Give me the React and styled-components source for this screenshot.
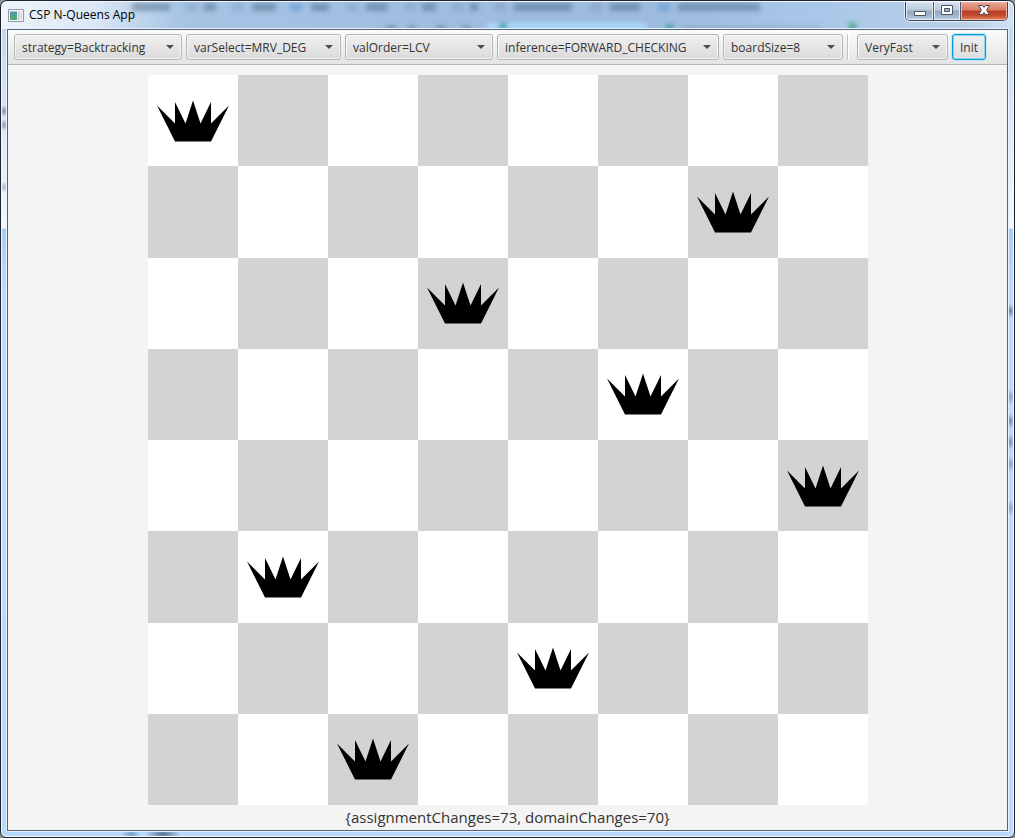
import React, { useState } from "react";
import styled, { createGlobalStyle } from "styled-components";

const GlobalStyle = createGlobalStyle`
  * { box-sizing: border-box; }
  body {
    margin: 0;
    background: #8d9094;
    color: #333;
    font-family: "Open Sans", "Noto Sans", sans-serif;
    font-size: 12px;
  }
`;

const Window = styled.div`
  display: flex;
  flex-direction: column;
  min-height: 100vh;
  padding: 0 6px 6px;
  border: 1px solid #1e222c;
  border-radius: 7px 7px 6px 6px;
  box-shadow: inset 0 0 0 1px #f4f9ff;
  background:
    radial-gradient(ellipse 4px 6px at 3px 110px, #7d8ba0 0, #7d8ba000 100%),
    radial-gradient(ellipse 4px 6px at 3px 124px, #8799c0 0, #8799c000 100%),
    radial-gradient(ellipse 4px 6px at 3px 186px, #a9b6cb 0, #a9b6cb00 100%),
    radial-gradient(ellipse 5px 7px at calc(100% - 4px) 310px, #67809a 0, #67809a00 100%),
    radial-gradient(ellipse 5px 8px at calc(100% - 4px) 396px, #8f9ccb 0, #8f9ccb00 100%),
    radial-gradient(ellipse 5px 8px at calc(100% - 4px) 420px, #7f88b8 0, #7f88b800 100%),
    radial-gradient(ellipse 5px 8px at calc(100% - 4px) 441px, #7f88b8 0, #7f88b800 100%),
    radial-gradient(ellipse 5px 8px at calc(100% - 4px) 463px, #8f9ccb 0, #8f9ccb00 100%),
    radial-gradient(ellipse 5px 8px at calc(100% - 4px) 507px, #8f9ccb 0, #8f9ccb00 100%),
    radial-gradient(ellipse 10px 5px at 130px calc(100% - 3px), #6f9cc8 0, #6f9cc800 100%),
    radial-gradient(ellipse 18px 6px at 162px calc(100% - 3px), #4f6f8f 0, #6f8cae00 100%),
    linear-gradient(#b9d1ee 0, #d3e4f7 90px, #f2f8fe 227px, #a9cdf0 228px, #badbfd 290px, #b9dafb);
`;

const TitleBar = styled.header`
  display: grid;
  height: 28px;
  margin: 0 -5px;
  overflow: hidden;
  border-radius: 6px 6px 0 0;
  border-top: 1px solid #f4f9ff;
  background: linear-gradient(90deg, #edf4fb 0, #dce8f5 90px, #a6c4e4 180px, #a0bedf 420px, #9dbbdc 640px, #a9c7e8 820px, #b9cfe8 960px, #cfe0f3);
`;

const Glass = styled.svg`
  grid-area: 1 / 1;
  width: 1000px;
  height: 27px;
`;

const TitleRow = styled.div`
  z-index: 1;
  display: flex;
  grid-area: 1 / 1;
  align-items: flex-start;
  gap: 5px;
  min-width: 0;
  padding: 0 5px 0 6px;
`;

const AppIcon = styled.svg`
  width: 16px;
  height: 14px;
  margin-top: 6px;
`;

const Title = styled.h1`
  flex: 1;
  margin: 4px 0 0;
  color: #000;
  font-size: 12px;
  font-weight: 400;
  line-height: 18px;
`;

const Captions = styled.div`
  display: flex;
  border: 1px solid #3c4454;
  border-top: 0;
  border-radius: 0 0 5px 5px;
  box-shadow: 0 0 0 1px #e3eefa;
  overflow: hidden;
`;

const Caption = styled.button`
  display: grid;
  place-items: center;
  width: ${(p) => p.$w}px;
  height: 18px;
  padding: 0;
  border: 0;
  border-right: ${(p) => (p.$close ? 0 : "1px solid #4d586a")};
  box-shadow: inset 0 0 0 1px ${(p) => (p.$close ? "#f0b5a8" : "#e3ebf5")};
  background: ${(p) =>
    p.$close
      ? "linear-gradient(#eaa797 0, #d77a67 45%, #bd3a22 50%, #c44c2e 75%, #e2875f)"
      : "linear-gradient(#d3dfed 0, #bccbdd 45%, #93a6be 50%, #a0b5ce 75%, #bdd2e8)"};
`;

const Client = styled.main`
  display: flex;
  flex: 1;
  flex-direction: column;
  border: 1px solid #56657c;
  box-shadow: 0 0 0 1px #e6f1fc;
  background: #f4f4f4;
`;

const ToolBar = styled.div`
  display: flex;
  align-items: center;
  gap: 4px;
  height: 35px;
  padding: 0 6px;
  border-bottom: 1px solid #b5b5b5;
  background: linear-gradient(#fbfbfb, #e4e4e4);
`;

const Picker = styled.label`
  display: grid;
  flex: 0 1 ${(p) => p.$w}px;
  align-items: center;
`;

const Select = styled.select`
  grid-area: 1 / 1;
  width: 100%;
  height: 26px;
  padding: 0 20px 0 7px;
  appearance: none;
  border: 1px solid #b4b4b4;
  border-radius: 3px;
  background: linear-gradient(#f0f0f0, #dadada);
  box-shadow: inset 0 0 0 1px #f6f6f6;
  color: #333;
  font: inherit;
`;

const Arrow = styled.svg`
  z-index: 1;
  grid-area: 1 / 1;
  justify-self: end;
  width: 8px;
  height: 4px;
  margin-right: 8px;
  fill: #4c4c4c;
  pointer-events: none;
`;

const Separator = styled.div`
  width: 2px;
  height: 26px;
  margin-right: 4px;
  border-left: 1px solid #c4c4c4;
  background: #fff;
`;

const InitButton = styled.button`
  width: 34px;
  height: 26px;
  padding: 0;
  border: 1px solid #039ed3;
  border-radius: 3px;
  background: linear-gradient(#f0f0f0, #dedede);
  box-shadow: inset 0 0 0 1px #8fd3ee, 0 0 1px 1px #c3e6f3;
  color: #333;
  font: inherit;
`;

const Board = styled.div`
  display: grid;
  flex: 1;
  grid-template-columns: repeat(8, 1fr);
  grid-template-rows: repeat(8, 1fr);
  align-self: center;
  width: 100%;
  max-width: 720px;
  margin-top: 10px;
`;

const Square = styled.div`
  display: grid;
  place-items: center;
  background: ${(p) => (p.$dark ? "#d3d3d3" : "#fff")};
`;

const Crown = styled.svg`
  width: 80%;
`;

const Status = styled.output`
  display: block;
  font-size: 15px;
  line-height: 25px;
  text-align: center;
`;

const settings = [
  { name: "Strategy", value: "strategy=Backtracking", width: 168 },
  { name: "Variable selection", value: "varSelect=MRV_DEG", width: 155 },
  { name: "Value ordering", value: "valOrder=LCV", width: 148 },
  { name: "Inference", value: "inference=FORWARD_CHECKING", width: 222 },
  { name: "Board size", value: "boardSize=8", width: 120 },
];

const queens = [0, 6, 3, 5, 7, 1, 4, 2];

function GlassReflection() {
  return (
    <Glass viewBox="0 0 1000 27" aria-hidden="true">
      <defs>
        <filter id="soft" x="-5%" y="-50%" width="110%" height="200%">
          <feGaussianBlur stdDeviation="2.500" />
        </filter>
      </defs>
      <g filter="url(#soft)" strokeWidth="8" fill="none">
        <path
          stroke="#4c6889"
          strokeOpacity=".5"
          d="M130 5H168M202 5H214M250 5H274M309 5H327M364 5H386M420 5H434M468 5H476M512 5H570M608 5H638M676 5H758"
        />
        <path
          stroke="#4c6889"
          strokeOpacity=".2"
          d="M184 5H196M230 5H242M344 5H356M402 5H414M450 5H462M492 5H504M588 5H600M680 28H820"
        />
        <path stroke="#5c9ad6" strokeOpacity=".6" d="M288 5H300M656 5H668" />
        <path stroke="#4c6889" strokeOpacity=".4" d="M384 27H394M406 27H414M434 27H444M460 27H468" />
        <path stroke="#a9d8ff" d="M485 25H645" />
        <path stroke="#2f9b9b" strokeOpacity=".8" d="M497 25H505M664 26H671" />
        <path stroke="#2f9b6b" strokeOpacity=".8" d="M847 25H854" />
      </g>
    </Glass>
  );
}

function Choice({ name, value, width }) {
  return (
    <Picker $w={width}>
      <Select aria-label={name} defaultValue={value}>
        <option>{value}</option>
      </Select>
      <Arrow viewBox="0 0 8 4" aria-hidden="true">
        <path d="M0 0H8L4 4Z" />
      </Arrow>
    </Picker>
  );
}

function Queen() {
  return (
    <Crown viewBox="0 0 72 42" role="img" aria-label="Queen">
      <path d="M0 5.500L18 23.500V2L28.500 23.500L36 0.500L43.500 23.500L54 2V23.500L72 5.500L54 41.500H18Z" />
    </Crown>
  );
}

export default function App() {
  const [placed, setPlaced] = useState(queens);
  return (
    <>
      <GlobalStyle />
      <Window>
        <TitleBar>
          <GlassReflection />
          <TitleRow>
            <AppIcon viewBox="0 0 16 14" aria-hidden="true">
              <defs>
                <linearGradient id="pane" x2="0" y2="1">
                  <stop offset="0" stopColor="#5b8fb0" />
                  <stop offset="1" stopColor="#4fae6e" />
                </linearGradient>
              </defs>
              <path d="M.5 1.500H15.500V13.500H.5Z" fill="#f7f7f7" stroke="#8f979f" />
              <path d="M2 3.500H9V12H2Z" fill="url(#pane)" />
              <path d="M10 3.500H12V12H10ZM13 3.500H14V12H13Z" fill="#c9ced3" />
            </AppIcon>
            <Title>CSP N-Queens App</Title>
            <Captions>
              <Caption $w={28} aria-label="Minimize">
                <svg width="14" height="14" viewBox="0 0 14 14">
                  <path d="M1.500 7.500H12.500V11.500H1.500Z" fill="#fff" stroke="#4d5462" />
                </svg>
              </Caption>
              <Caption $w={27} aria-label="Maximize">
                <svg width="14" height="14" viewBox="0 0 14 14">
                  <path d="M1.500 1.500H12.500V10.500H1.500Z" fill="#fff" stroke="#4d5462" />
                  <path d="M4.500 4.500H9.500V7.500H4.500Z" fill="#9fb3cb" stroke="#4d5462" />
                </svg>
              </Caption>
              <Caption $w={46} $close aria-label="Close">
                <svg width="14" height="14" viewBox="0 0 14 14">
                  <path d="M1.500 1.500H5.500L7 3.500L8.500 1.500H12.500L9.500 6L12.500 10.500H8.500L7 8.500L5.500 10.500H1.500L4.500 6Z" fill="#fff" stroke="#5b4a55" />
                </svg>
              </Caption>
            </Captions>
          </TitleRow>
        </TitleBar>
        <Client>
          <ToolBar role="toolbar">
            {settings.map((s) => (
              <Choice key={s.name} {...s} />
            ))}
            <Separator />
            <Choice name="Speed" value="VeryFast" width={91} />
            <InitButton onClick={() => setPlaced(queens)}>Init</InitButton>
          </ToolBar>
          <Board>
            {placed.flatMap((queen, row) =>
              placed.map((_, col) => (
                <Square key={`${row}-${col}`} $dark={(row + col) % 2 === 1}>
                  {queen === col && <Queen />}
                </Square>
              ))
            )}
          </Board>
          <Status>{"{assignmentChanges=73, domainChanges=70}"}</Status>
        </Client>
      </Window>
    </>
  );
}
